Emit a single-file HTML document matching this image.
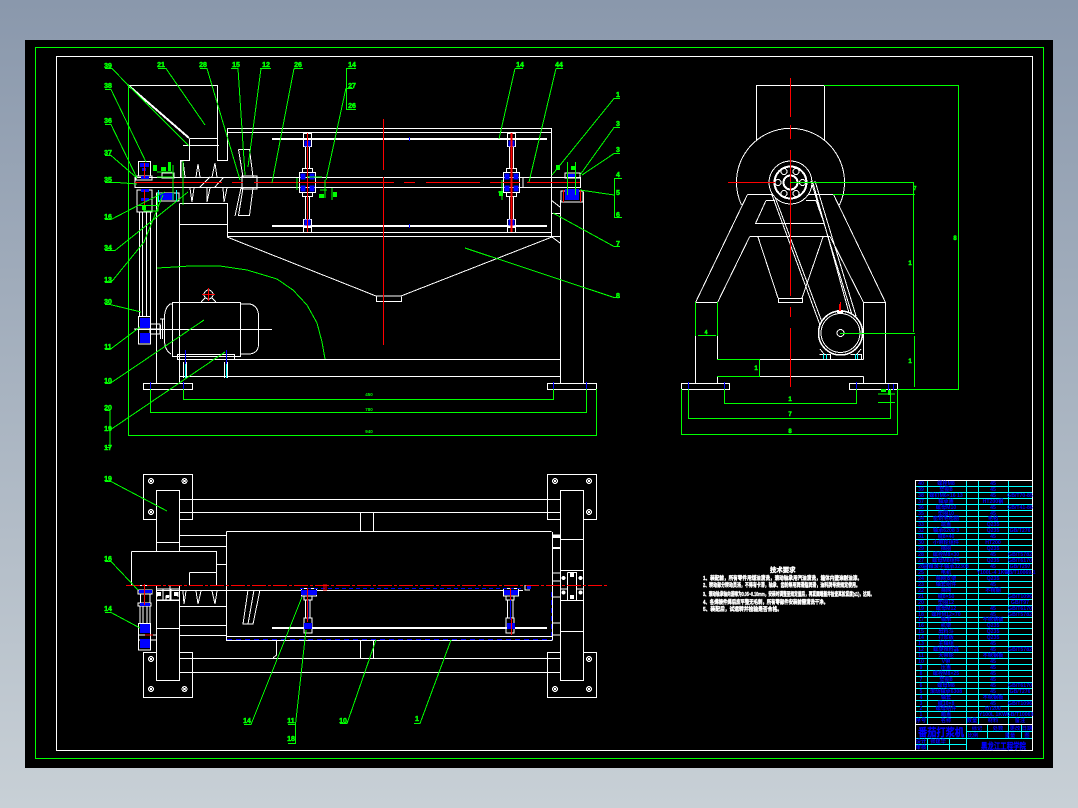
<!DOCTYPE html>
<html><head><meta charset="utf-8"><title>番茄打浆机</title>
<style>
html,body{margin:0;padding:0;width:1078px;height:808px;overflow:hidden;background:linear-gradient(#8a98ac,#c8d0d6)}
svg{position:absolute;left:0;top:0}
text{font-family:"Liberation Sans","Noto Sans CJK SC",sans-serif}
.w{fill:none;stroke:#fff;stroke-width:1}
.t{fill:none;stroke:#fff;stroke-width:2}
.g{fill:none;stroke:#0f0;stroke-width:1}
.r{fill:none;stroke:#f00;stroke-width:1}
.b{fill:#00f;stroke:none}
.bl{fill:none;stroke:#00f;stroke-width:1}
.c{fill:none;stroke:#0ff;stroke-width:1}
.l text,.l{fill:#0f0;font-size:7px;font-weight:bold;text-anchor:middle;stroke:#0f0;stroke-width:.5}
.n text{fill:#00f;font-size:5.2px;text-anchor:middle;font-weight:bold}
.m text{fill:#fff;font-size:5.6px;font-weight:bold;stroke:#fff;stroke-width:.4}
</style></head><body>
<svg width="1078" height="808" viewBox="0 0 1078 808" shape-rendering="crispEdges">
<defs>
<g id="hub">
<path class="w" d="M-8 -10V10H8V-10ZM-5 -14H5V-10H-5ZM-5 10H5V14H-5ZM-4 -49H4V-36H-4ZM-4 37H4V50H-4ZM-2 -36V-14M2 -36V-14M-2 14V37M2 14V37M-4 -44H4M-4 45H4"/>
<rect class="b" x="-7" y="-9" width="5" height="6"/><rect class="b" x="2" y="-9" width="5" height="6"/>
<rect class="b" x="-7" y="3" width="5" height="6"/><rect class="b" x="2" y="3" width="5" height="6"/>
<rect class="b" x="-3" y="-42" width="6" height="6"/><rect class="b" x="-3" y="37" width="6" height="6"/>
</g>
<g id="bolt"><circle class="w" r="2.5"/><path class="w" d="M-1.5 -1.5L1.5 1.5M-1.5 1.5L1.5 -1.5"/></g>
</defs>
<rect x="25" y="40" width="1028" height="728" fill="#000"/>
<rect class="g" x="35.5" y="47.5" width="1008" height="711"/>
<rect class="w" x="56.5" y="56.5" width="976" height="694"/>

<!-- FRONT VIEW white -->
<path class="w" d="M128.5 85.5H217.5V161M189.5 138.5H217.5M183 145.5H219M189.5 138.5V160.5H180.5V178M217.5 160.5H227.5V128.5H551.5V236.5M227.5 132.5H551.5M179.5 203.5H227.5V236.5M179.5 224.5H227.5M227.5 232.5H551.5M227.5 236.5H551.5"/>
<path class="t" d="M128 85L189 138"/>
<path class="t" d="M272 139H547M272 226H547"/>
<path class="w" d="M135 177.5H580.5V187.5H135ZM523 177V188"/>
<path class="w" d="M156.5 196V383M179.5 203.5V383M560.5 200V383M583.5 192V383"/>
<path class="w" d="M143.5 383.5H192.5V389.5H143.5ZM547.5 383.5H596.5V389.5H547.5ZM179.5 359.5H560.5M179.5 376.5H560.5"/>
<path class="w" d="M227 237L376 296H401L552 237M376.5 296.5V301.5H401.5V296.5"/>
<path class="w" d="M551 200L560 207M551.5 213.5H560M552 236.5H560.5M552 237L560 243"/>
<!-- spikes -->
<path class="w" d="M181 161L183 161L185 177M181 161V177M198 164L196 177M198 164L200 177M215 163L212 177M215 163L217 177M190 188L192 202L194 188M207 188L207 202L210 188M223 188L224 202L227 188M199 188L210 177M214 188L224 177"/>
<path class="w" d="M238.5 149.5H249.5L253 177M238.5 149.5L243 177M243 188L238.5 215.5H249.5L253 188M241 188L235 216"/>
<path class="w" d="M242 176H257V189H242Z"/>
<!-- left bearing and belt -->
<path class="w" d="M138.5 161.5H150.5V176H138.5ZM136 176H152V180H136ZM137 190H152V212H137ZM139.5 212V316M142.5 212V316M146.5 212V316M150.5 212V316"/>
<rect class="b" x="140" y="163" width="9" height="4"/><rect class="b" x="142" y="168" width="4" height="3"/><rect class="b" x="141" y="176" width="8" height="3"/><rect class="b" x="141" y="189" width="8" height="3"/><rect class="b" x="141" y="198" width="8" height="3"/>
<path class="w" d="M156.5 193H179V201H156.5ZM162 173H174V178H162Z"/>
<rect class="b" x="160" y="193" width="14" height="7"/>
<path class="c" d="M158.5 190V202M176.5 190V202"/>
<!-- right bearing -->
<path class="w" d="M565 173H580V178H565ZM561 191H583V202H561Z"/>
<rect class="b" x="565" y="189" width="14" height="11"/><rect class="b" x="567" y="174" width="9" height="3"/>
<path class="r" d="M563.5 190V202M580.5 190V202"/>
<!-- hubs -->
<use href="#hub" x="307.5" y="182.5"/>
<use href="#hub" x="511.5" y="182.5"/>
<path class="bl" d="M409.5 137V141M409.5 224V228"/>
<!-- motor -->
<path class="w" d="M172.5 302.5H240.5V356.5H172.5ZM172.5 304H170Q164.5 308 164.5 318V340Q164.5 350 171 354M240.5 304H250Q258.5 306 258.5 316V344Q258.5 354 248 354H240.5M177.5 354.5H234.5V359.5H177.5ZM160 319H164M162.5 319V339M160.5 325V339M135 329.5H272"/>
<circle class="w" cx="208.5" cy="294.5" r="4.5"/><path class="w" d="M201 302L205 298M216 302L212 298"/>
<path class="r" d="M202 294.5H215M208.5 288V301"/>
<path class="w" d="M183.5 362V378M186.5 362V378M224.5 362V378M227.5 362V378"/>
<path class="bl" d="M185.5 350V364M226.5 350V364"/>
<path class="c" d="M185.5 364V378M226.5 364V378"/>
<!-- pulley -->
<path class="w" d="M138.5 316.5H150.5V344H138.5ZM134 329H160M150 324H160V334H150Z"/>
<rect class="b" x="140" y="318" width="10" height="10"/><rect class="b" x="140" y="333" width="10" height="10"/>
<!-- red lines -->
<path class="r" d="M135 182.5H222M232 182.5H243M254 182.5H394M404 182.5H415M426 182.5H480M490 182.5H520M527 182.5H580"/>
<path class="r" d="M383.5 119V170M383.5 177V345"/>
<path class="r" d="M307.5 133V232M511 133V232M512 133V232"/>
<path class="r" d="M144.5 163V178M144.5 190V205"/>
<path class="bl" d="M150.5 382V391M183.5 382V391M553.5 382V391M586.5 382V391"/>

<!-- FRONT green -->
<path class="g" d="M128.5 85V435.5H596.5V389M150.5 389V412.5H586.5V389M183.5 389V399.5H553.5V389"/>
<path class="g" d="M105 68.5H112L128 85L189 146M105 89.5H111L146 162M105 124.5H111L137 178M105 155.5H111L137 178M105 182.5H117L137 184M105 219.5H111L139 205L165 192M105 250.5H115L188 192M105 282.5H111L144 242L163 195M105 304.5H110L141 312M105 349.5H110L140 327M105 383.5H110L204 320M105 410.5H110V447.5H105M110 430L225 352"/>
<path class="g" d="M158 68.5H166L205 125M200 68.5H207L240 180M231 68.5H238L245 175M260 68.5H271M261 68.5L248 167M294 68.5H303M294 68.5L272 183M356 68.5H346.5V109.5H356M346 88.5H353M346 88L326 180M515 68.5H523M515 68.5L499 139M556 68.5H563M556 68.5L529 182M620 98.5H614L552 175M620 127.5H614L580 175M620 153.5H614L582 175M622 178.5H614.5V217.5H622M580 190L614 195M620 246.5H614L553 213M620 297.5H614L465 248"/>
<path class="g" d="M157 268L175 267L190 266L220 266L247 270L277 279L293 290L307 305L317 323L322 342L325 359"/>
<path class="g" d="M137.5 205.5H158V211H144V205M157.5 193V205M183 161V205M173 165V200M157 172H172M157 177H172"/>
<rect x="153" y="165" width="4" height="6" fill="#0f0"/><rect x="161" y="167" width="5" height="4" fill="#0f0"/><rect x="168" y="162" width="3" height="9" fill="#0f0"/><rect x="142" y="206" width="4" height="4" fill="#0f0"/><rect x="556" y="165" width="4" height="5" fill="#0f0"/><rect x="571" y="166" width="4" height="4" fill="#0f0"/>
<path class="g" d="M332 188V200M297 178V190M307 177H322M325 180V198M320 190H327M502 180V200M498 192H503M567.5 162V195M575.5 162V195"/>
<rect x="319" y="194" width="5" height="4" fill="#0f0"/><rect x="333" y="192" width="4" height="5" fill="#0f0"/><rect x="499" y="191" width="4" height="5" fill="#0f0"/>

<g class="l">
<text x="108" y="68">39</text><text x="108" y="88">38</text><text x="108" y="123">36</text><text x="108" y="155">37</text><text x="108" y="182">35</text><text x="108" y="219">16</text><text x="108" y="250">34</text><text x="108" y="282">13</text><text x="108" y="304">30</text><text x="108" y="349">11</text><text x="108" y="383">10</text><text x="108" y="410">20</text><text x="108" y="431">19</text><text x="108" y="450">17</text>
<text x="161" y="67">21</text><text x="203" y="67">28</text><text x="236" y="67">15</text><text x="266" y="67">12</text><text x="298" y="67">26</text><text x="352" y="67">14</text><text x="352" y="88">27</text><text x="352" y="108">26</text><text x="520" y="67">14</text><text x="559" y="67">44</text>
<text x="618" y="97">1</text><text x="618" y="126">3</text><text x="618" y="152">3</text><text x="618" y="177">4</text><text x="618" y="195">5</text><text x="618" y="217">6</text><text x="618" y="246">7</text><text x="618" y="298">8</text>
</g>
<g fill="#0f0" font-size="4.5" font-weight="bold" text-anchor="middle" style="font-family:'Liberation Sans',sans-serif">
<text x="369" y="396">450</text><text x="369" y="411">780</text><text x="369" y="433">940</text>
</g>

<!-- SIDE VIEW -->
<path class="w" d="M756.5 140V85.5H824.5V140"/>
<path class="w" d="M741.5 205A54 54 0 1 1 839.5 205"/>
<circle class="w" cx="790.5" cy="182.5" r="21.5"/>
<circle class="w" cx="790.5" cy="182.5" r="16.5"/>
<circle class="w" cx="790.5" cy="182.5" r="15.5"/>
<circle class="w" cx="790.5" cy="182.5" r="7.5"/>
<circle class="w" cx="790.5" cy="182.5" r="6.5"/>
<circle class="w" cx="784" cy="171.5" r="3"/><circle class="w" cx="796" cy="171.5" r="3"/><circle class="w" cx="778" cy="182.5" r="3"/><circle class="w" cx="802.5" cy="182.5" r="3"/><circle class="w" cx="784" cy="193.5" r="3"/><circle class="w" cx="796" cy="193.5" r="3"/>
<path class="w" d="M747.5 194.5H772M809 194.5H833.5M747.5 194.5L695.5 302.5V383M749.5 237L717.5 302.5V359.5M833.5 194.5L842 212L885.5 302.5V383M830 236.5L863.5 302.5V359.5M766 200.5H775M806 200.5H816M766 200.5L755.5 223.5H824M816 200.5L824 223M749.5 236.5H830M758 237L778 298M823 237L802 298M778.5 298.5H802.5V302.5H778.5Z"/>
<path class="w" d="M695.5 302.5H717.5M863.5 302.5H885.5M717.5 359.5H863.5M717.5 376.5H863.5M717.5 376.5V383M863.5 376.5V383M681.5 383.5H729.5V389.5H681.5ZM849.5 383.5H897.5V389.5H849.5Z"/>
<path class="w" d="M772 195L820 325M775 197L822 322M811 181L853 318M815 181L856 316M813 183L851 320"/>
<circle fill="#000" stroke="#fff" stroke-width="1.5" cx="840.5" cy="333" r="22"/>
<circle class="w" cx="840.5" cy="333" r="19.5"/>
<circle class="w" cx="840.5" cy="333" r="3.5"/>
<path class="w" d="M819.5 354.5H830.5V359M850.5 354.5H861.5V359M824 354L820 349M857 354L861 349"/>
<rect x="837" y="310" width="6" height="3" fill="#fff"/><path class="r" d="M840.5 302V311"/><path class="r" d="M839.5 304V311"/>
<path class="c" d="M823.5 354V359M826.5 354V359M855.5 354V359M857.5 354V359"/>
<path class="r" d="M790.5 78V117M790.5 125V139M790.5 150V296M790.5 307V317M790.5 328V387M728 182.5H775"/>
<path class="bl" d="M688.5 382V390M724.5 382V390M856.5 382V390M888.5 384V390M893.5 384V390"/>
<path class="g" d="M824 85.5H958.5V389.5H897M790 182.5H913.5V332M833 194.5H915M840 333.5H915M914.5 336V387M695.5 302V336M717.5 302V336M698 335.5H716M717 359.5H759.5V376.5H717M724.5 389V403.5H856.5V389M688.5 389V418.5H890.5V389M681.5 389V434.5H897.5V389M878 394H895M878 402.5H895M890.5 389V405"/>
<g class="l">
<text x="915" y="190" style="font-size:5px">7</text><text x="955" y="240" style="font-size:6px">8</text><text x="910" y="265" style="font-size:6px">1</text><text x="910" y="363" style="font-size:6px">1</text><text x="706" y="334" style="font-size:5px">4</text><text x="756" y="370" style="font-size:6px">1</text><text x="790" y="401" style="font-size:6px">1</text><text x="790" y="416" style="font-size:6px">7</text><text x="790" y="433" style="font-size:6px">8</text>
</g>
<rect x="881" y="389" width="5" height="3" fill="#0f0"/><rect x="888" y="390" width="3" height="5" fill="#0f0"/>

<!-- PLAN VIEW -->
<path class="w" d="M143.5 474.5H192.5V519.5H143.5ZM143.5 652.5H192.5V697.5H143.5ZM547.5 474.5H596.5V519.5H547.5ZM547.5 652.5H596.5V697.5H547.5Z"/>
<path d="M156.5 490.5h23v190h-23zM560.5 490.5h23v190h-23z" fill="#000" stroke="#fff"/>
<rect x="132" y="552" width="84" height="33" fill="#000"/>
<path class="w" d="M179.5 499.5H560.5M179.5 512.5H560.5M179.5 658.5H560.5M179.5 672.5H560.5M360.5 512.5V531M373.5 512.5V531M360.5 640V658M373.5 640V658"/>
<path class="w" d="M156 542.5H179M131.5 551.5H216.5V585M131.5 551.5V585M189.5 572.5H216.5M189.5 572.5V585M179.5 535.5H226.5M179.5 546.5H226.5M216.5 564.5H226.5M226.5 531.5H551.5M226.5 531.5V640.5H552M552.5 532V640.5M131 585.5H156"/>
<path class="w" d="M179.5 590.5H523M156 590.5H179M156 600.5H179M156 628.5H179M179.5 606.5H226.5M179.5 625.5H226.5M179.5 635.5H226.5M226.5 636.5H552M170 585V600M163 589H179"/>
<path class="w" d="M183 591L184 604L186 591M196 591L198 604L201 591M212 591L215 604L217 591"/>
<path class="w" d="M248 590L243 624H253L260 590M254 590L248 624"/>
<path class="t" d="M272 628H547"/>
<path class="w" d="M276.5 640V655L273 658"/>
<path class="w" d="M301.5 588.5H316.5V596H301.5ZM304 596H312V600H304ZM304 618H312V633H304ZM305.5 600V618M310 600V618"/>
<rect x="301" y="590" width="16" height="5" fill="#00f"/><rect x="304" y="623" width="8" height="6" fill="#00f"/>
<path class="w" d="M503.5 588.5H518.5V596H503.5ZM506 596H514V600H506ZM506 618H514V633H506ZM507.5 600V618M513 600V618"/>
<rect x="504" y="590" width="14" height="5" fill="#00f"/><rect x="507" y="623" width="8" height="6" fill="#00f"/>
<path class="bl" d="M510.5 600V620M308 600V620"/>
<path d="M227 639.5H552" stroke="#00f" stroke-dasharray="5 4" fill="none"/>
<path d="M300 588.5H524" stroke="#00f" stroke-dasharray="4 3" fill="none"/>
<path d="M551.5 592V636" stroke="#00f" stroke-dasharray="5 3" fill="none"/>
<!-- right bearing plan -->
<path class="w" d="M560 570.5H584M560 600.5H584M567.5 572.5H576.5V600M567.5 572.5V600M560 539.5H584M560 631.5H584M560 589H567M576 589H584"/>
<path class="w" d="M552 535H560M552 537.5H560M552 548H560M552 573H560M552 581H560M552 597H560M552 623H560M552 635H560"/>
<rect x="552" y="535" width="8" height="2" fill="#fff"/><rect x="552" y="547" width="8" height="2" fill="#fff"/>
<circle cx="563.5" cy="578" r="2" fill="#fff"/><circle cx="580.5" cy="578" r="2" fill="#fff"/><circle cx="563.5" cy="592.5" r="2" fill="#fff"/><circle cx="580.5" cy="592.5" r="2" fill="#fff"/><rect x="570" y="573" width="4" height="4" fill="#fff"/><rect x="570" y="595" width="4" height="4" fill="#fff"/>
<!-- left bearing plan -->
<path class="w" d="M138 590H152V594H138ZM140.5 594V603H150V594M138 603H151V606H138ZM140 606V623M143 606V623M147 606V623M150 606V623M138.5 623.5H150.5V650H138.5ZM138 635H156M138 640H156"/>
<rect x="139" y="590" width="13" height="3" fill="#00f"/><rect x="140" y="603" width="10" height="3" fill="#00f"/><rect x="140" y="624" width="10" height="9" fill="#00f"/><rect x="140" y="639" width="10" height="9" fill="#00f"/>
<path class="w" d="M157 589H179M157 600H179M163 589V600M171 589V600M166 596H170V600H166ZM157 592V597M178 592V597"/>
<rect x="157" y="592" width="4" height="4" fill="#fff"/><rect x="174" y="592" width="4" height="4" fill="#fff"/><rect x="166" y="595" width="3" height="3" fill="#fff"/>
<!-- bolts -->
<use href="#bolt" x="151" y="481"/><use href="#bolt" x="184.5" y="481"/><use href="#bolt" x="151" y="512"/><use href="#bolt" x="151" y="659"/><use href="#bolt" x="151" y="689"/><use href="#bolt" x="184.5" y="689"/>
<use href="#bolt" x="555" y="481"/><use href="#bolt" x="589" y="481"/><use href="#bolt" x="589" y="512"/><use href="#bolt" x="589" y="659"/><use href="#bolt" x="555" y="689"/><use href="#bolt" x="589" y="689"/>
<!-- red centre -->
<path d="M126 585.5H608" stroke="#f00" stroke-dasharray="14 2 3 2" fill="none"/>
<path class="r" d="M144.5 584V605M307.5 588V622M510.5 588V600M511.5 618V635M145 635H153M324 584V591M326 584V591"/>
<path class="w" d="M525 585V590H530"/>
<rect x="527" y="586" width="4" height="3" fill="#00f"/>
<!-- plan green -->
<path class="g" d="M105 481.5H111L167 511M105 561.5H111L138 590M105 612.5H111L140 628M244 724.5H251L302 597M288 724.5H295.5L306 630M295.5 724V743.5H288M340 723.5H347L376 640M414 723.5H420L451 640"/>
<g class="l">
<text x="108" y="481">19</text><text x="108" y="561">16</text><text x="108" y="611">14</text><text x="247" y="723">14</text><text x="291" y="723">11</text><text x="291" y="741">18</text><text x="343" y="723">10</text><text x="417" y="721">1</text>
</g>

<!-- TECH NOTES -->
<g class="m">
<text x="770" y="572" style="font-size:6.4px">技术要求</text>
<text x="703" y="580" textLength="159" lengthAdjust="spacingAndGlyphs">1、装配前，所有零件用煤油清洗，滚动轴承用汽油清洗，箱体内壁涂耐油漆。</text>
<text x="703" y="587" textLength="157" lengthAdjust="spacingAndGlyphs">2、转动部分转动灵活，不得有卡滞，轴承、齿轮等用润滑脂润滑，油料牌号按规定使用。</text>
<text x="703" y="596" textLength="171" lengthAdjust="spacingAndGlyphs">3、滚动轴承轴向游隙为0.05~0.10mm，安装时调整至规定值后，再紧固端盖并检查其松紧度(≤1)，达到。</text>
<text x="703" y="604" textLength="125" lengthAdjust="spacingAndGlyphs">4、各焊接件焊后应平整无毛刺，所有零部件安装前需清洗干净。</text>
<text x="703" y="611" textLength="79" lengthAdjust="spacingAndGlyphs">5、装配后，试运转并检验是否合格。</text>
</g>

<!-- TABLE -->
<path class="c" d="M916 480.5H1033M916 486.5H1033M916 492.5H1033M916 498.5H1033M916 504.5H1033M916 510.5H1033M916 516.5H1033M916 521.5H1033M916 527.5H1033M916 533.5H1033M916 539.5H1033M916 545.5H1033M916 551.5H1033M916 557.5H1033M916 563.5H1033M916 569.5H1033M916 575.5H1033M916 581.5H1033M916 587.5H1033M916 593.5H1033M916 599.5H1033M916 605.5H1033M916 611.5H1033M916 617.5H1033M916 622.5H1033M916 628.5H1033M916 634.5H1033M916 640.5H1033M916 646.5H1033M916 652.5H1033M916 658.5H1033M916 664.5H1033M916 670.5H1033M916 676.5H1033M916 682.5H1033M916 688.5H1033M916 694.5H1033M916 700.5H1033M916 706.5H1033M916 711.5H1033M916 717.5H1033"/>
<path class="c" d="M927.5 480V724M966.5 480V751M978.5 480V724M1008.5 480V738M987.5 724V738M1021.5 724V738M916 738.5H1033M966.5 731.5H1033M916 744.5H966M927.5 738V751M949.5 738V751"/>
<path d="M916 480.5H1033" stroke="#fff" fill="none"/>
<path d="M915.5 480V751M915.5 750.5H1033M1032.5 480V751M916 724.5H1033" stroke="#fff" stroke-width="1" fill="none"/>
<g class="n">
<text x="921" y="485">40</text><text x="946" y="485">螺栓M8</text><text x="993" y="485">45</text>
<text x="921" y="491">39</text><text x="946" y="491">垫圈8</text><text x="993" y="491">45</text>
<text x="921" y="497">38</text><text x="946" y="497">螺钉M6×16 13</text><text x="993" y="497">45</text><text x="1020" y="497">GB/T70-85</text>
<text x="921" y="503">37</text><text x="946" y="503">轴承盖</text><text x="993" y="503">HT200钢</text>
<text x="921" y="509">36</text><text x="946" y="509">螺母M10</text><text x="993" y="509">45</text><text x="1020" y="509">GB/T41-86</text>
<text x="921" y="515">35</text><text x="946" y="515">垫圈10</text><text x="993" y="515">45</text>
<text x="921" y="520">34</text><text x="946" y="520">密封毛毡圈</text><text x="993" y="520">毛毡</text>
<text x="921" y="526">33</text><text x="946" y="526">端盖</text><text x="993" y="526">Q235</text>
<text x="921" y="532">32</text><text x="946" y="532">轴承6208 3</text><text x="993" y="532">Q235</text><text x="1020" y="532">GB/T276</text>
<text x="921" y="538">31</text><text x="946" y="538">键8×40</text><text x="993" y="538">45</text>
<text x="921" y="544">30</text><text x="946" y="544">小带轮组件</text><text x="993" y="544">HT200</text>
<text x="921" y="550">29</text><text x="946" y="550">挡圈</text><text x="993" y="550">Q235</text>
<text x="921" y="556">28</text><text x="946" y="556">螺栓M8×30</text><text x="993" y="556">45</text><text x="1020" y="556">GB/T5782</text>
<text x="921" y="562">27</text><text x="946" y="562">螺母M8组件</text><text x="993" y="562">Q235</text><text x="1020" y="562">GB/T6170</text>
<text x="921" y="568">26</text><text x="946" y="568">圆锥滚子轴承32308</text><text x="993" y="568">45</text><text x="1020" y="568">GB/T297</text>
<text x="921" y="574">25</text><text x="946" y="574">电机</text><text x="993" y="574">Y100L-4 1KW</text><text x="1020" y="574">GB/T10069.1</text>
<text x="921" y="580">24</text><text x="946" y="580">筛网支架</text><text x="993" y="580">Q235</text>
<text x="921" y="586">23</text><text x="946" y="586">轴套组件</text><text x="993" y="586">45</text>
<text x="921" y="592">22</text><text x="946" y="592">筛网</text><text x="993" y="592">不锈钢</text>
<text x="921" y="598">21</text><text x="946" y="598">键8×50</text><text x="1020" y="598">GB/T1096</text>
<text x="921" y="604">20</text><text x="946" y="604">垫圈12</text><text x="1020" y="604">GB/T97</text>
<text x="921" y="610">19</text><text x="946" y="610">螺母M12</text><text x="993" y="610">45</text><text x="1020" y="610">GB/T6170</text>
<text x="921" y="616">18</text><text x="946" y="616">螺栓M12×70</text><text x="993" y="616">45</text><text x="1020" y="616">GB/T5782</text>
<text x="921" y="621">17</text><text x="946" y="621">轴承</text><text x="993" y="621">不锈钢板</text>
<text x="921" y="627">16</text><text x="946" y="627">机架</text><text x="993" y="627">Q235</text>
<text x="921" y="633">15</text><text x="946" y="633">出料斗</text><text x="993" y="633">Q235</text>
<text x="921" y="639">14</text><text x="946" y="639">打浆板</text><text x="993" y="639">Q235</text>
<text x="921" y="645">13</text><text x="946" y="645">主轴组</text><text x="993" y="645">45</text>
<text x="921" y="651">12</text><text x="946" y="651">螺旋推料器</text><text x="993" y="651">45</text><text x="1020" y="651">GB/T5782</text>
<text x="921" y="657">11</text><text x="946" y="657">大带轮</text><text x="993" y="657">不锈钢板</text>
<text x="921" y="663">10</text><text x="946" y="663">V带</text><text x="993" y="663">45</text>
<text x="921" y="669">9</text><text x="946" y="669">压盖</text><text x="993" y="669">45</text>
<text x="921" y="675">8</text><text x="946" y="675">螺栓M8×25</text><text x="993" y="675">45</text>
<text x="921" y="681">7</text><text x="946" y="681">垫圈8</text><text x="993" y="681">45</text>
<text x="921" y="687">6</text><text x="946" y="687">螺母M8</text><text x="993" y="687">45</text><text x="1020" y="687">GB/T6170</text>
<text x="921" y="693">5</text><text x="946" y="693">滚动轴承6308</text><text x="993" y="693">45</text><text x="1020" y="693">GB/T276</text>
<text x="921" y="699">4</text><text x="946" y="699">轴套</text><text x="993" y="699">不锈钢板</text>
<text x="921" y="705">3</text><text x="946" y="705">键10×8</text><text x="993" y="705">45</text><text x="1020" y="705">GB/T1096</text>
<text x="921" y="710">2</text><text x="946" y="710">螺母组件</text><text x="993" y="710">HT200</text>
<text x="921" y="716">1</text><text x="946" y="716">箱盖</text><text x="993" y="716">Y100L 1KW</text><text x="1020" y="716">GB/T10069</text>
<text x="921" y="722">序号</text><text x="946" y="722">名称</text><text x="972" y="722">数量</text><text x="993" y="722">材料</text><text x="1020" y="722">备注</text>
<text x="977" y="730">标记</text><text x="998" y="730">处数</text><text x="1015" y="730">更改</text><text x="1027" y="730">日期</text>
<text x="973" y="737">比例</text><text x="1010" y="737">重量</text><text x="1027" y="737">图</text>
<text x="921" y="743">设计</text><text x="938" y="743">张建华</text><text x="921" y="749">审核</text>
</g>
<text x="918" y="736" fill="#00f" font-size="11" font-weight="bold" textLength="46" lengthAdjust="spacingAndGlyphs" stroke="#00f" stroke-width=".3">番茄打浆机</text>
<text x="981" y="749" fill="#00f" font-size="8.5" font-weight="bold" textLength="45" lengthAdjust="spacingAndGlyphs" stroke="#00f" stroke-width=".3">黑龙江工程学院</text>
</svg>
</body></html>
